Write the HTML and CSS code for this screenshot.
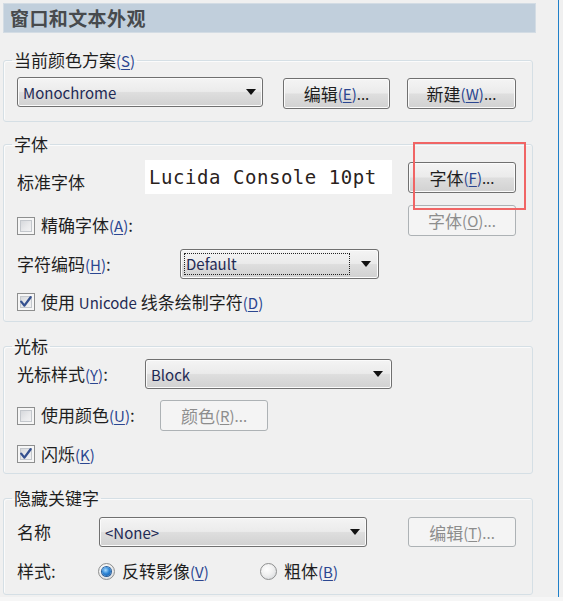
FILE: index.html
```html
<!DOCTYPE html>
<html lang="zh-CN">
<head>
<meta charset="utf-8">
<title>窗口和文本外观</title>
<link rel="stylesheet" href="styles.css">
</head>
<body>
<div class="frame">
  <div class="title">窗口和文本外观</div>

  <fieldset class="group g1">
    <legend>当前颜色方案<span class="mn">(<u>S</u>)</span></legend>
    <div class="row r-scheme">
      <div class="combo scheme"><span class="val latin">Monochrome</span><i class="arrow"></i></div>
      <div class="btn b-edit">编辑<span class="mn">(<u>E</u>)</span><span class="dots">...</span></div>
      <div class="btn b-new">新建<span class="mn">(<u>W</u>)</span><span class="dots">...</span></div>
    </div>
  </fieldset>

  <fieldset class="group g2">
    <legend>字体</legend>
    <div class="row r-font">
      <span class="lbl w128 low">标准字体</span>
      <div class="fontbox">Lucida Console 10pt</div>
      <div class="btn b-font">字体<span class="mn">(<u>F</u>)</span><span class="dots">...</span></div>
    </div>
    <div class="row r-precise">
      <span class="check low"></span>
      <span class="clabel low">精确字体<span class="mn">(<u>A</u>)</span>:</span>
      <div class="btn disabled push-right">字体<span class="mn">(<u>O</u>)</span><span class="dots">...</span></div>
    </div>
    <div class="row r-enc">
      <span class="lbl w163">字符编码<span class="mn">(<u>H</u>)</span>:</span>
      <div class="combo enc"><span class="val latin focus">Default</span><i class="arrow"></i></div>
    </div>
    <div class="row r-uni">
      <span class="check on"><svg viewBox="0 0 18 18" width="18" height="18"><path d="M4.2 8.6 L7.4 12.6 L13.6 4.2" fill="none" stroke="#34508f" stroke-width="2.3" stroke-linecap="round" stroke-linejoin="round"/></svg></span>
      <span class="clabel">使用 <span class="latin">Unicode</span> 线条绘制字符<span class="mn">(<u>D</u>)</span></span>
    </div>
  </fieldset>

  <fieldset class="group g3">
    <legend>光标</legend>
    <div class="row r-cstyle">
      <span class="lbl w128">光标样式<span class="mn">(<u>Y</u>)</span>:</span>
      <div class="combo block"><span class="val latin">Block</span><i class="arrow"></i></div>
    </div>
    <div class="row r-color">
      <span class="cbwrap w143">
        <span class="check"></span>
        <span class="clabel">使用颜色<span class="mn">(<u>U</u>)</span>:</span>
      </span>
      <div class="btn disabled">颜色<span class="mn">(<u>R</u>)</span><span class="dots">...</span></div>
    </div>
    <div class="row r-blink">
      <span class="check on"><svg viewBox="0 0 18 18" width="18" height="18"><path d="M4.2 8.6 L7.4 12.6 L13.6 4.2" fill="none" stroke="#34508f" stroke-width="2.3" stroke-linecap="round" stroke-linejoin="round"/></svg></span>
      <span class="clabel">闪烁<span class="mn">(<u>K</u>)</span></span>
    </div>
  </fieldset>

  <fieldset class="group g4">
    <legend>隐藏关键字</legend>
    <div class="row r-name">
      <span class="lbl w82">名称</span>
      <div class="combo none"><span class="val latin">&lt;None&gt;</span><i class="arrow"></i></div>
      <div class="btn disabled push-right">编辑<span class="mn">(<u>T</u>)</span><span class="dots">...</span></div>
    </div>
    <div class="row r-style">
      <span class="lbl w81">样式:</span>
      <span class="rwrap w162">
        <span class="radio on"></span>
        <span class="clabel">反转影像<span class="mn">(<u>V</u>)</span></span>
      </span>
      <span class="rwrap">
        <span class="radio"></span>
        <span class="clabel">粗体<span class="mn">(<u>B</u>)</span></span>
      </span>
    </div>
  </fieldset>

  <div class="highlight"></div>
</div>
<div class="strip"></div>
</body>
</html>
```

FILE: styles.css
```css
html, body {
  margin: 0;
  padding: 0;
}
body {
  width: 563px;
  height: 601px;
  background: #f0f0f0;
  font-family: "Noto Sans CJK SC", "Liberation Sans", sans-serif;
  font-size: 17px;
  color: #1e1e1e;
  overflow: hidden;
}
.frame {
  position: relative;
  box-sizing: border-box;
  width: 559px;
  height: 597px;
  padding: 3px 0 3px 3px;
  border-right: 1px solid #1f80c9;
}
.strip {
  height: 4px;
  background: #f6f6f6;
}
.title {
  box-sizing: border-box;
  width: 533px;
  height: 30px;
  background: #c1cfdc;
  border: 1px solid #d3dce4;
  padding-left: 6px;
  line-height: 27px;
  font-size: 19px;
  font-weight: 700;
  letter-spacing: 0.4px;
  color: #474a4d;
}
.group {
  box-sizing: border-box;
  width: 530px;
  margin: 0;
  border: 1px solid #d5dfe5;
  border-radius: 3px;
  padding: 0 16px 12px 13px;
  box-shadow: inset 1px 1px 0 #fbfbfb;
}
.group legend {
  margin-left: -5px;
  padding: 0 2px;
  line-height: 20px;
  height: 20px;
  font-size: 17px;
}
.g1 { margin-top: 17px; padding-top: 7px; }
.g2 { margin-top: 12px; padding-top: 6px; padding-bottom: 8px; }
.g3 { margin-top: 14px; padding-top: 3px; padding-bottom: 8px; }
.g4 { margin-top: 14px; padding-top: 9px; padding-bottom: 12px; }

.row {
  display: flex;
  align-items: center;
}
.lbl, .clabel {
  white-space: nowrap;
  line-height: 22px;
}
.low { margin-top: 10px; }
.w128 { width: 128px; flex: none; }
.w163 { width: 163px; flex: none; }
.w82 { width: 82px; flex: none; }
.w81 { width: 81px; flex: none; }
.w143 { width: 143px; flex: none; }
.w162 { width: 162px; flex: none; }
.cbwrap, .rwrap {
  display: flex;
  align-items: center;
}
.push-right { margin-left: auto; }

.latin { color: #1f2a55; font-size: 15px; }
.mn { color: #2b4690; font-size: 15px; }
.dots { font-size: 15px; }
.mn u { text-underline-offset: 2px; text-decoration-thickness: 1px; }

/* combos and buttons (Windows 7 look) */
.combo, .btn {
  box-sizing: border-box;
  display: flex;
  align-items: center;
  flex: none;
  border: 1px solid #707070;
  border-radius: 3px;
  background: linear-gradient(#f4f4f4 0%, #ebebeb 48%, #dedede 52%, #d1d1d1 100%);
  box-shadow: inset 0 0 0 1px #fbfbfb;
}
.combo {
  height: 30px;
  padding-left: 5px;
}
.combo .val { white-space: nowrap; }
.arrow {
  display: block;
  margin-left: auto;
  margin-right: 6px;
  width: 0;
  height: 0;
  border-left: 5px solid transparent;
  border-right: 5px solid transparent;
  border-top: 6px solid #111;
}
.btn {
  justify-content: center;
  height: 31px;
  width: 108px;
  white-space: nowrap;
}
.btn.disabled {
  border-color: #adb2b5;
  background: #f4f4f4;
  box-shadow: none;
  color: #8d8d8d;
}
.btn.disabled .mn { color: #8d8d8d; }

.r-scheme { align-items: flex-start; }
.scheme { width: 246px; }
.b-edit { width: 107px; margin-left: 20px; margin-top: 1px; }
.b-new { width: 109px; margin-left: 17px; margin-top: 1px; }

.r-font { height: 34px; }
.fontbox {
  box-sizing: border-box;
  width: 247px;
  height: 34px;
  flex: none;
  background: #ffffff;
  padding-left: 4px;
  display: flex;
  align-items: center;
  font-family: "DejaVu Sans Mono", "Liberation Mono", monospace;
  font-size: 19px;
  letter-spacing: 0.55px;
  color: #2a221c;
  white-space: nowrap;
}
.b-font { margin-left: 16px; }

.r-precise { margin-top: 11px; height: 31px; }
.r-enc { margin-top: 13px; }
.enc { width: 199px; padding-left: 3px; }
.enc .arrow { margin-right: 7px; }
.focus {
  box-sizing: border-box;
  width: 166px;
  height: 22px;
  border: 1px dotted #222;
  padding-left: 1px;
  line-height: 20px;
}
.r-uni { margin-top: 12px; height: 22px; }

.block { width: 247px; }
.block .arrow { margin-right: 8px; }
.r-color { margin-top: 11px; height: 31px; }
.r-color .btn { width: 108px; }
.r-blink { margin-top: 12px; height: 22px; }

.r-name { height: 30px; }
.none { width: 268px; }
.r-name .btn { height: 30px; }
.r-style { margin-top: 13px; height: 22px; }

/* checkbox */
.check {
  box-sizing: border-box;
  flex: none;
  width: 18px;
  height: 18px;
  border: 1px solid #8e8f8f;
  background: linear-gradient(135deg, #cdd0d4 0%, #e9eaec 55%, #f8f8f8 100%);
  box-shadow: inset 0 0 0 2px #f6f6f6, inset 0 0 0 3px #c3c7cc;
  margin-right: 6px;
  position: relative;
}
.check svg {
  position: absolute;
  left: -1px;
  top: -1px;
}

/* radio */
.radio {
  box-sizing: border-box;
  flex: none;
  width: 17px;
  height: 17px;
  border-radius: 50%;
  border: 1px solid #8e8f8f;
  background: radial-gradient(circle at 40% 35%, #ffffff 0%, #f0f0f0 45%, #cfd2d6 100%);
  margin-right: 7px;
  display: flex;
  align-items: center;
  justify-content: center;
}
.radio.on::after {
  content: "";
  width: 9px;
  height: 9px;
  border-radius: 50%;
  background: radial-gradient(circle at 40% 35%, #a9dcff 0%, #2f86d6 45%, #0d4d98 100%);
  box-shadow: 0 0 0 1px #2a5f9a;
}

/* red annotation rectangle drawn over the dialog */
.highlight {
  position: absolute;
  left: 413px;
  top: 142px;
  width: 113px;
  height: 68px;
  box-sizing: border-box;
  border: 2px solid #f06565;
  pointer-events: none;
}
```
